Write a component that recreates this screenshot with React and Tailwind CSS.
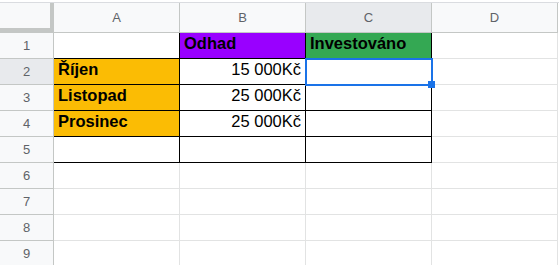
import React from "react";

const cols = ["A", "B", "C", "D"];

// cell data: t = text, bg = fill, b = bold, r = right aligned
const data = {
  1: { B: { t: "Odhad", bg: "bg-[#9900ff]", b: true }, C: { t: "Investováno", bg: "bg-[#34a853]", b: true } },
  2: { A: { t: "Říjen", bg: "bg-[#fbbc04]", b: true }, B: { t: "15 000Kč", r: true } },
  3: { A: { t: "Listopad", bg: "bg-[#fbbc04]", b: true }, B: { t: "25 000Kč", r: true } },
  4: { A: { t: "Prosinec", bg: "bg-[#fbbc04]", b: true }, B: { t: "25 000Kč", r: true } },
};

const isBlack = (row, col) => {
  if (col === "D") return { r: false, b: false };
  if (row >= 1 && row <= 5) return { r: true, b: true };
  return { r: false, b: false };
};

const App = () => {
  const rows = [1, 2, 3, 4, 5, 6, 7, 8, 9];

  return (
    <div
      className="relative w-[559px] h-[265px] overflow-hidden bg-white pt-[2px]"
      style={{ fontFamily: '"Liberation Sans", Arial, sans-serif' }}
    >
      {/* column headers */}
      <div className="flex h-[31px] border-t border-[#dadce0]">
        <div className="w-[54px] h-full bg-[#f8f9fa] border-r-4 border-b-[5px] border-[#c4c7c5] shrink-0"></div>
        {cols.map((c) => (
          <div
            key={c}
            className={`w-[126px] h-full shrink-0 flex items-center justify-center border-r border-b border-[#c4c7c5] text-[13px] text-[#5f6368] ${
              c === "C" ? "bg-[#e8eaed]" : "bg-[#f8f9fa]"
            }`}
          >
            {c}
          </div>
        ))}
      </div>

      {rows.map((row) => (
        <div key={row} className="flex h-[26px]">
          <div
            className={`w-[54px] h-full shrink-0 flex items-center justify-center border-r border-b border-[#c4c7c5] text-[13px] text-[#5f6368] ${
              row === 2 ? "bg-[#e8eaed]" : "bg-[#f8f9fa]"
            }`}
          >
            {row}
          </div>
          {cols.map((c) => {
            const cell = (data[row] && data[row][c]) || null;
            const blk = isBlack(row, c);
            return (
              <div
                key={c}
                className={`w-[126px] h-full shrink-0 flex items-end pb-[2px] px-[4px] border-r border-b text-[16.5px] text-black ${
                  cell && cell.bg ? cell.bg : "bg-white"
                } ${blk.r ? "border-r-black" : "border-r-[#e2e3e3]"} ${
                  blk.b ? "border-b-black" : "border-b-[#e2e3e3]"
                } ${cell && cell.b ? "font-bold" : ""} ${cell && cell.r ? "justify-end" : "justify-start"}`}
              >
                {cell ? cell.t : ""}
              </div>
            );
          })}
        </div>
      ))}

      {/* selection on C2 */}
      <div className="absolute left-[305px] top-[58px] w-[128px] h-[28px] border-2 border-[#1a73e8]"></div>
      <div className="absolute left-[428px] top-[81px] w-[7px] h-[7px] bg-[#1a73e8]"></div>
    </div>
  );
};

export default App;
